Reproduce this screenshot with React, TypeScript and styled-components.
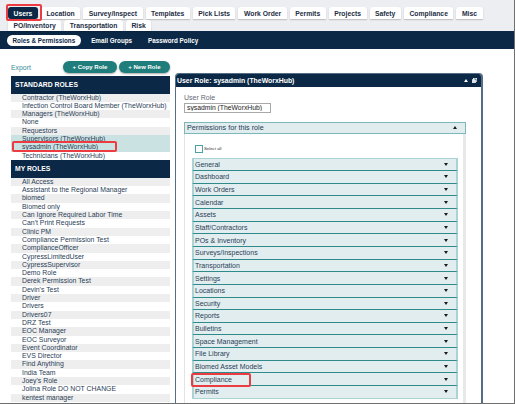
import React from "react";
import styled, { createGlobalStyle } from "styled-components";

const NAVY = "#0b2946";
const RED = "#ec3b41";

const Global = createGlobalStyle`
  html, body { margin: 0; padding: 0; background: #fff; }
  body { font-family: "Liberation Sans", Arial, sans-serif; overflow: hidden; }
  * { box-sizing: border-box; }
`;

/* Red annotation rectangle laid over the marked item */
const Mark = styled.span<{ $l: number; $t: number; $w: number; $h: number }>`
  position: absolute;
  left: ${(p) => p.$l}px;
  top: ${(p) => p.$t}px;
  width: ${(p) => p.$w}px;
  height: ${(p) => p.$h}px;
  z-index: 5;
  border: 2px solid ${RED};
  border-radius: 2px;
  pointer-events: none;
`;

const Frame = styled.div`
  width: 515px;
  height: 404px;
  overflow: hidden;
  border-right: 1px solid #6f6f6f;
  border-bottom: 1px solid #6f6f6f;
  display: flex;
  flex-direction: column;
  background: #fff;
`;

const TabBar = styled.div`
  background: #eceef1;
  height: 31px;
  padding: 7px 0 0 8px;
  display: flex;
  flex-direction: column;
  gap: 1px;
`;

const TabRow = styled.div<{ $h: number }>`
  display: flex;
  gap: 3px;
  height: ${(p) => p.$h}px;
`;

const Tab = styled.div<{ $active?: boolean }>`
  position: relative;
  padding: 0 5.5px;
  display: flex;
  align-items: center;
  font-size: 6.8px;
  font-weight: bold;
  white-space: nowrap;
  background: ${(p) => (p.$active ? NAVY : "#fff")};
  color: ${(p) => (p.$active ? "#fff" : "#1d2e44")};
  border-radius: ${(p) => (p.$active ? "3px" : "3px 3px 0 0")};
  box-shadow: 0 1px 1.5px rgba(0, 0, 0, 0.22);
`;

const NavBar = styled.div`
  background: ${NAVY};
  height: 18px;
  display: flex;
  align-items: center;
  padding-left: 7px;
  gap: 5px;
`;

const SubTab = styled.div<{ $active?: boolean }>`
  height: 11px;
  padding: 0 5.5px;
  border-radius: 6px;
  display: flex;
  align-items: center;
  font-size: 6.3px;
  font-weight: bold;
  white-space: nowrap;
  background: ${(p) => (p.$active ? "#fff" : "transparent")};
  color: ${(p) => (p.$active ? NAVY : "#fff")};
`;

const Main = styled.div`
  flex: 1;
  min-height: 0;
  display: grid;
  grid-template-columns: 159px 308px;
  column-gap: 5px;
  padding-left: 11px;
`;

const LeftCol = styled.div`
  padding-top: 12px;
  display: flex;
  flex-direction: column;
  min-height: 0;
`;

const Toolbar = styled.div`
  height: 12px;
  display: flex;
  align-items: center;
  justify-content: space-between;
  margin-bottom: 2.5px;
`;

const ExportLink = styled.a`
  color: #3a8c98;
  font-size: 6.9px;
  text-decoration: none;
`;

const ButtonGroup = styled.div`
  display: flex;
  gap: 2px;
`;

const PillButton = styled.button`
  height: 12px;
  padding: 0 9.5px;
  border: none;
  border-radius: 6px;
  background: #1f7e7b;
  color: #fff;
  font-family: "Liberation Sans", Arial, sans-serif;
  font-size: 6px;
  font-weight: bold;
  white-space: nowrap;
  box-shadow: 0 1px 2px rgba(0, 0, 0, 0.35);
`;

const RoleHeader = styled.div`
  height: 18px;
  background: ${NAVY};
  color: #fff;
  font-size: 6.8px;
  font-weight: bold;
  display: flex;
  align-items: center;
  padding-left: 4px;
  text-transform: uppercase;
`;

const RoleRow = styled.div<{ $alt?: boolean; $sel?: boolean }>`
  position: relative;
  height: 8.3px;
  line-height: 8.3px;
  font-size: 6.9px;
  color: #2a4057;
  padding-left: 11px;
  white-space: nowrap;
  background: ${(p) => (p.$sel ? "#cae2e2" : p.$alt ? "#eeeeee" : "#fff")};
`;

const RightCol = styled.div`
  padding-top: 24px;
  min-height: 0;
  display: flex;
`;

const Panel = styled.section`
  flex: 1;
  display: flex;
  flex-direction: column;
  border: 1px solid #566e84;
  border-right-width: 2px;
  border-bottom: none;
  border-radius: 4px 4px 0 0;
  overflow: hidden;
`;

const PanelHeader = styled.div`
  height: 13px;
  flex: none;
  background: ${NAVY};
  color: #fff;
  font-size: 6.9px;
  font-weight: bold;
  display: flex;
  align-items: center;
  justify-content: space-between;
  padding: 0 4px 0 1px;
  white-space: nowrap;
`;

const HeaderIcons = styled.div`
  display: flex;
  align-items: center;
  gap: 4px;
`;

const PanelBody = styled.div`
  flex: 1;
  min-height: 0;
  display: flex;
  flex-direction: column;
  padding: 6.7px 15px 0 8px;
`;

const FieldLabel = styled.div`
  font-size: 7px;
  line-height: 8px;
  color: #5f6b77;
`;

const TextInput = styled.input`
  margin-top: 1.3px;
  width: 87px;
  height: 10px;
  border: 1px solid #a8a8a8;
  padding: 0 2px;
  font-family: "Liberation Sans", Arial, sans-serif;
  font-size: 6.8px;
  color: #222;
  outline: none;
`;

const PermSection = styled.div`
  margin-top: 9px;
  flex: 1;
  min-height: 0;
  display: flex;
  flex-direction: column;
`;

const PermHeader = styled.div`
  height: 12px;
  flex: none;
  background: #e1ecee;
  border: 1px solid #7cb8bb;
  display: flex;
  align-items: center;
  justify-content: space-between;
  padding: 0 8px 0 2px;
  font-size: 7.2px;
  color: #1e3a56;
`;

const PermBody = styled.div`
  flex: 1;
  min-height: 0;
  border-left: 1px solid #e3e3e3;
  border-right: 3px solid #e8e8e8;
  padding: 0 5px 0 7px;
`;

const SelectAll = styled.label`
  margin-top: 11px;
  height: 8px;
  display: flex;
  align-items: center;
  padding-left: 3px;
  gap: 1.5px;
  font-size: 4.3px;
  color: #333;
`;

const CheckBox = styled.span`
  width: 7.5px;
  height: 7.5px;
  border: 1px solid #4c9fa3;
  background: #fff;
`;

const PermList = styled.div`
  margin-top: 5.5px;
  display: flex;
  flex-direction: column;
`;

const PermRow = styled.div`
  position: relative;
  height: 12.65px;
  flex: none;
  background: #e2edef;
  border-left: 2px solid #a9d3d4;
  border-right: 2px solid #a9d3d4;
  border-bottom: 1px solid #2e8a8b;
  display: flex;
  align-items: center;
  justify-content: space-between;
  padding: 0 8px 0 1px;
  font-size: 7px;
  color: #2a4157;
  white-space: nowrap;
  &:first-child {
    border-top: 1px solid #a9d3d4;
  }
  &:last-child {
    border-bottom-color: #a9d3d4;
  }
`;

const Caret = ({ up = false, color = "#1a1a1a" }: { up?: boolean; color?: string }) => (
  <svg width="4" height="3" viewBox="0 0 4 3">
    {up ? <path d="M0 3 L2 0 L4 3 Z" fill={color} /> : <path d="M0 0 L4 0 L2 3 Z" fill={color} />}
  </svg>
);

const RestoreIcon = () => (
  <svg width="5" height="5" viewBox="0 0 5 5">
    <rect x="1.5" y="0.3" width="3.2" height="3" fill="none" stroke="#fff" strokeWidth="0.7" />
    <rect x="0.3" y="1.7" width="3.2" height="3" fill="#dfe6ec" stroke="#fff" strokeWidth="0.6" />
  </svg>
);

const topTabs1 = ["Users", "Location", "Survey/Inspect", "Templates", "Pick Lists", "Work Order", "Permits", "Projects", "Safety", "Compliance", "Misc"];
const topTabs2 = ["PO/Inventory", "Transportation", "Risk"];

const standardRoles = [
  "Contractor (TheWorxHub)",
  "Infection Control Board Member (TheWorxHub)",
  "Managers (TheWorxHub)",
  "None",
  "Requestors",
  "Supervisors (TheWorxHub)",
  "sysadmin (TheWorxHub)",
  "Technicians (TheWorxHub)",
];

const myRoles = [
  "All Access",
  "Assistant to the Regional Manager",
  "biomed",
  "Biomed only",
  "Can Ignore Required Labor Time",
  "Can't Print Requests",
  "Clinic PM",
  "Compliance Permission Test",
  "ComplianceOfficer",
  "CypressLimitedUser",
  "CypressSupervisor",
  "Demo Role",
  "Derek Permission Test",
  "Devin's Test",
  "Driver",
  "Drivers",
  "Drivers07",
  "DRZ Test",
  "EOC Manager",
  "EOC Surveyor",
  "Event Coordinator",
  "EVS Director",
  "Find Anything",
  "India Team",
  "Joey's Role",
  "Jolina Role DO NOT CHANGE",
  "kentest manager",
];

const permissions = [
  "General",
  "Dashboard",
  "Work Orders",
  "Calendar",
  "Assets",
  "Staff/Contractors",
  "POs & Inventory",
  "Surveys/Inspections",
  "Transportation",
  "Settings",
  "Locations",
  "Security",
  "Reports",
  "Bulletins",
  "Space Management",
  "File Library",
  "Biomed Asset Models",
  "Compliance",
  "Permits",
];

export default function App() {
  return (
    <>
      <Global />
      <Frame>
        <TabBar>
          <TabRow $h={12}>
            {topTabs1.map((t, i) => (
              <Tab key={t} $active={i === 0}>
                {t}
                {i === 0 && <Mark $l={-2.5} $t={-3} $w={36} $h={16.5} />}
              </Tab>
            ))}
          </TabRow>
          <TabRow $h={11}>
            {topTabs2.map((t) => (
              <Tab key={t}>{t}</Tab>
            ))}
          </TabRow>
        </TabBar>
        <NavBar>
          <SubTab $active>Roles &amp; Permissions</SubTab>
          <SubTab>Email Groups</SubTab>
          <SubTab>Password Policy</SubTab>
        </NavBar>
        <Main>
          <LeftCol>
            <Toolbar>
              <ExportLink href="#">Export</ExportLink>
              <ButtonGroup>
                <PillButton>+ Copy Role</PillButton>
                <PillButton>+ New Role</PillButton>
              </ButtonGroup>
            </Toolbar>
            <RoleHeader>Standard Roles</RoleHeader>
            {standardRoles.map((r, i) => (
              <RoleRow key={r} $alt={i % 2 === 0} $sel={i === 5 || i === 6}>
                {r}
                {i === 6 && <Mark $l={1} $t={-2} $w={105} $h={10.3} />}
              </RoleRow>
            ))}
            <RoleHeader>My Roles</RoleHeader>
            {myRoles.map((r, i) => (
              <RoleRow key={r} $alt={i % 2 === 0}>
                {r}
              </RoleRow>
            ))}
          </LeftCol>
          <RightCol>
            <Panel>
              <PanelHeader>
                <span>User Role: sysadmin (TheWorxHub)</span>
                <HeaderIcons>
                  <Caret up color="#fff" />
                  <RestoreIcon />
                </HeaderIcons>
              </PanelHeader>
              <PanelBody>
                <FieldLabel>User Role</FieldLabel>
                <TextInput readOnly value="sysadmin (TheWorxHub)" />
                <PermSection>
                  <PermHeader>
                    <span>Permissions for this role</span>
                    <Caret up />
                  </PermHeader>
                  <PermBody>
                    <SelectAll>
                      <CheckBox />
                      Select all
                    </SelectAll>
                    <PermList>
                      {permissions.map((p) => (
                        <PermRow key={p}>
                          <span>{p}</span>
                          <Caret />
                          {p === "Compliance" && <Mark $l={-3} $t={0} $w={60} $h={13.5} />}
                        </PermRow>
                      ))}
                    </PermList>
                  </PermBody>
                </PermSection>
              </PanelBody>
            </Panel>
          </RightCol>
        </Main>
      </Frame>
    </>
  );
}
